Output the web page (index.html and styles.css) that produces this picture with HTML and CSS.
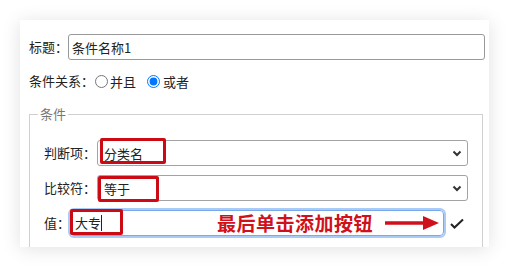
FILE: index.html
```html
<!DOCTYPE html>
<html lang="zh-CN">
<head>
    <meta charset="UTF-8">
    <title>条件设置</title>
    <link rel="stylesheet" href="styles.css">
</head>
<body>

<div class="card">
    <div class="row title-row">
        <label class="label">标题：</label>
        <input class="text-input" type="text" value="条件名称1">
    </div>

    <div class="row radio-row">
        <span class="label">条件关系：</span>
        <label class="radio"><input type="radio" name="rel">并且</label>
        <label class="radio second"><input type="radio" name="rel" checked>或者</label>
    </div>

    <fieldset class="conditions">
        <legend>条件</legend>

        <div class="field">
            <span class="label">判断项：</span>
            <div class="select-wrap">
                <select class="select"><option>分类名</option></select>
                <svg class="chevron" width="10" height="7" viewBox="0 0 10 7"><polyline points="1.5,1.5 5,5 8.5,1.5" fill="none" stroke="#333" stroke-width="2"/></svg>
                <div class="mark mark-item"></div>
            </div>
        </div>

        <div class="field">
            <span class="label">比较符：</span>
            <div class="select-wrap">
                <select class="select"><option>等于</option></select>
                <svg class="chevron" width="10" height="7" viewBox="0 0 10 7"><polyline points="1.5,1.5 5,5 8.5,1.5" fill="none" stroke="#333" stroke-width="2"/></svg>
                <div class="mark mark-op"></div>
            </div>
        </div>

        <div class="field">
            <span class="label">值：</span>
            <div class="value-wrap">
                <div class="value-input">大专<span class="caret"></span></div>
                <div class="mark mark-value"></div>
                <div class="hint">最后单击添加按钮</div>
                <svg class="arrow" width="54" height="16" viewBox="0 0 54 16"><line x1="0" y1="8" x2="40" y2="8" stroke="#d0101a" stroke-width="3.5"/><polygon points="38,1 54,8 38,15" fill="#d0101a"/></svg>
            </div>
            <div class="add-btn">
                <svg width="14" height="11" viewBox="0 0 14 11"><polyline points="1,6 4.5,9.5 13,1.5" fill="none" stroke="#222" stroke-width="2"/></svg>
            </div>
        </div>
    </fieldset>
</div>

</body>
</html>
```

FILE: styles.css
```css
body {
    margin: 0;
    padding: 20px;
    background-color: #fff;
    font-family: "Noto Sans CJK SC", "Liberation Sans", sans-serif;
    font-size: 13px;
    color: #222;
}
.card {
    width: 469px;
    height: 227px;
    box-sizing: border-box;
    padding: 14px 4px 0 9px;
    background-color: #fff;
    box-shadow: 0 2px 18px rgba(0, 0, 0, 0.12);
    overflow: hidden;
}
.row {
    display: flex;
    align-items: center;
}
.label {
    white-space: nowrap;
    line-height: 20px;
}
.text-input {
    flex: 1;
    height: 26px;
    box-sizing: border-box;
    border: 1px solid #999;
    border-radius: 3px;
    padding: 0 3px;
    font-family: inherit;
    font-size: 13px;
    color: #222;
}
.radio-row {
    margin-top: 11px;
    height: 20px;
}
.radio {
    display: flex;
    align-items: center;
}
.radio input {
    width: 13px;
    height: 13px;
    margin: 0 2px 0 1px;
}
.radio.second input {
    margin-left: 11px;
    margin-right: 3px;
}

/* 条件 fieldset */
.conditions {
    margin: 14px 2px 0 0;
    padding: 17px 14px 30px 14px;
    border: 1px solid #d0d0d0;
    min-height: 160px;
}
.conditions legend {
    margin-left: -6px;
    padding: 0 2px;
    line-height: 18px;
    color: #777;
}
.field {
    display: flex;
    align-items: center;
    height: 26px;
    margin-bottom: 9px;
}
.select-wrap {
    position: relative;
    flex: 1;
    margin-left: 1px;
}
.select {
    appearance: none;
    width: 100%;
    height: 26px;
    box-sizing: border-box;
    border: 1px solid #a3a3a3;
    border-radius: 3px;
    padding: 0 6px;
    background-color: #fff;
    font-family: inherit;
    font-size: 13px;
    color: #222;
}
.chevron {
    position: absolute;
    right: 6px;
    top: 10px;
}
.mark {
    position: absolute;
    border: 3px solid #cc0a14;
    border-radius: 2px;
    box-sizing: border-box;
    pointer-events: none;
}
.mark-item {
    left: 3px;
    top: -2px;
    width: 66px;
    height: 26px;
}
.mark-op {
    left: 1px;
    top: 1px;
    width: 61px;
    height: 26px;
}
.value-wrap {
    position: relative;
    flex: 1;
}
.value-input {
    height: 26px;
    box-sizing: border-box;
    border: 1px solid #7aa8ec;
    border-radius: 4px;
    outline: 2px solid #a8cbf7;
    padding: 0 4px;
    line-height: 24px;
    background-color: #fff;
}
.caret {
    display: inline-block;
    width: 1px;
    height: 16px;
    background-color: #222;
    vertical-align: -3px;
}
.mark-value {
    left: 0;
    top: -1px;
    width: 53px;
    height: 26px;
}
.hint {
    position: absolute;
    left: 147px;
    top: 1px;
    font-size: 19px;
    font-weight: bold;
    line-height: 24px;
    color: #d0101a;
    letter-spacing: 0.5px;
}
.arrow {
    position: absolute;
    left: 315px;
    top: 5px;
}
.add-btn {
    width: 23px;
    display: flex;
    justify-content: center;
    padding-left: 1px;
}
```
